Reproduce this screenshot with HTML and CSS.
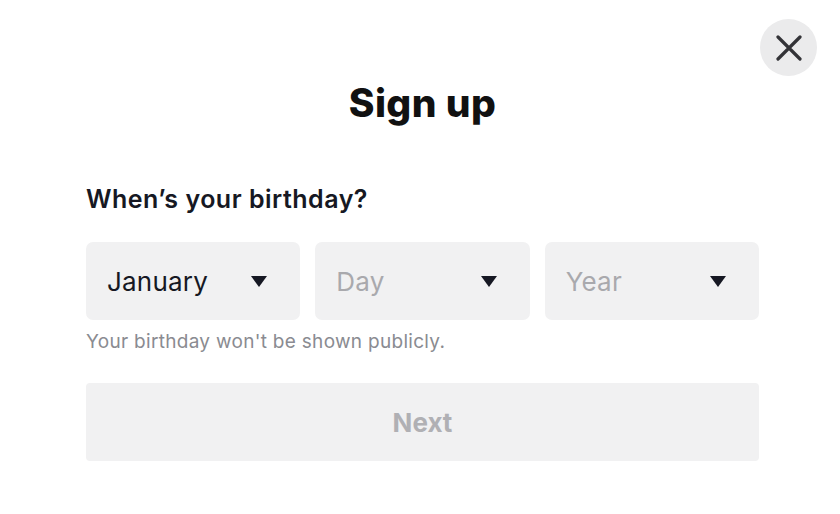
FILE: index.html
```html
<!DOCTYPE html>
<html lang="en">
<head>
<meta charset="utf-8">
<title>Sign up</title>
<link rel="stylesheet" href="styles.css">
</head>
<body>
<div class="modal">
  <button class="close" aria-label="Close">
    <svg width="26" height="26" viewBox="0 0 26 26"><path d="M2 2 L24 24 M24 2 L2 24" stroke="#333337" stroke-width="3.2" stroke-linecap="round" fill="none"/></svg>
  </button>
  <h1 class="title">Sign up</h1>
  <div class="label">When’s your birthday?</div>
  <div class="selects">
    <div class="select"><span class="value">January</span><span class="arrow"></span></div>
    <div class="select"><span class="value placeholder">Day</span><span class="arrow"></span></div>
    <div class="select"><span class="value placeholder">Year</span><span class="arrow"></span></div>
  </div>
  <div class="hint">Your birthday won't be shown publicly.</div>
  <button class="next">Next</button>
</div>
</body>
</html>
```
FILE: styles.css
```css
html, body {
  margin: 0;
  padding: 0;
  background: #ffffff;
}
body {
  font-family: "Inter", "Liberation Sans", sans-serif;
  width: 840px;
  height: 514px;
  overflow: hidden;
}
.modal {
  position: relative;
  width: 673px;
  padding: 0 0 0 86px;
  display: flex;
  flex-direction: column;
}
.close {
  position: absolute;
  top: 19px;
  left: 760px;
  width: 57px;
  height: 57px;
  border-radius: 50%;
  border: none;
  background: #ebebec;
  display: flex;
  align-items: center;
  justify-content: center;
  padding: 0;
}
.title {
  margin: 80px 0 0 0;
  font-size: 39px;
  line-height: 46px;
  font-weight: 800;
  color: #111;
  text-align: center;
  letter-spacing: 0.4px;
}
.label {
  margin-top: 58px;
  font-size: 25px;
  line-height: 30px;
  font-weight: 600;
  color: #161823;
  letter-spacing: 0.5px;
}
.selects {
  margin-top: 28px;
  display: grid;
  grid-template-columns: repeat(3, 1fr);
  gap: 15px;
}
.select {
  height: 78px;
  background: #f1f1f2;
  border-radius: 7px;
  display: flex;
  align-items: center;
  justify-content: space-between;
  padding: 0 33px 0 21px;
}
.value {
  font-size: 26px;
  color: #161823;
  letter-spacing: 0.2px;
}
.placeholder {
  color: #a9a9ad;
}
.arrow {
  width: 0;
  height: 0;
  border-left: 8px solid transparent;
  border-right: 8px solid transparent;
  border-top: 11px solid #161823;
}
.hint {
  margin-top: 10px;
  font-size: 19px;
  line-height: 24px;
  color: #8a8b91;
  letter-spacing: 0.3px;
}
.next {
  margin-top: 29px;
  height: 78px;
  border: none;
  border-radius: 4px;
  background: #f1f1f2;
  color: #b0b0b4;
  font-family: inherit;
  font-size: 26px;
  font-weight: 700;
}
```
